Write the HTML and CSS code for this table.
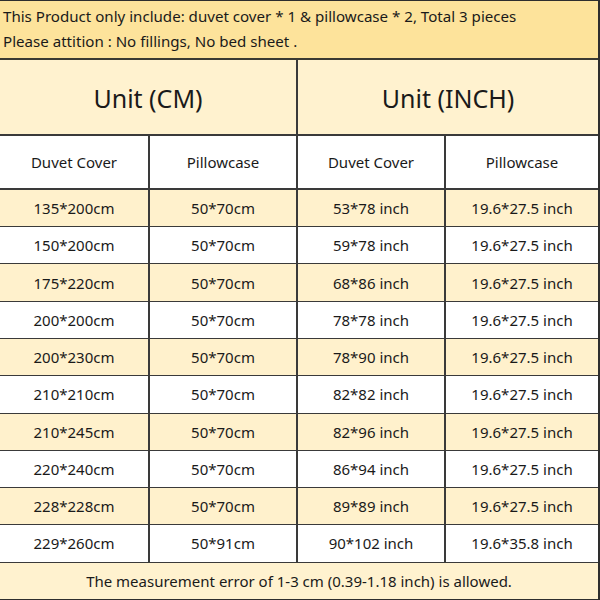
FILE: index.html
```html
<!DOCTYPE html>
<html>
<head>
<meta charset="utf-8">
<link rel="stylesheet" href="styles.css">
</head>
<body>
<div class="sheet">
  <div class="note">
    <div>This Product only include: duvet cover * 1 &amp; pillowcase * 2, Total 3 pieces</div>
    <div>Please attition : No fillings, No bed sheet .</div>
  </div>
  <table class="sizes">
    <colgroup>
      <col class="c1"><col class="c2"><col class="c3"><col class="c4">
    </colgroup>
    <tr class="unit"><td colspan="2">Unit (CM)</td><td colspan="2">Unit (INCH)</td></tr>
    <tr class="head"><td>Duvet Cover</td><td>Pillowcase</td><td>Duvet Cover</td><td>Pillowcase</td></tr>
    <tr class="alt"><td>135*200cm</td><td>50*70cm</td><td>53*78 inch</td><td>19.6*27.5 inch</td></tr>
    <tr><td>150*200cm</td><td>50*70cm</td><td>59*78 inch</td><td>19.6*27.5 inch</td></tr>
    <tr class="alt"><td>175*220cm</td><td>50*70cm</td><td>68*86 inch</td><td>19.6*27.5 inch</td></tr>
    <tr><td>200*200cm</td><td>50*70cm</td><td>78*78 inch</td><td>19.6*27.5 inch</td></tr>
    <tr class="alt"><td>200*230cm</td><td>50*70cm</td><td>78*90 inch</td><td>19.6*27.5 inch</td></tr>
    <tr><td>210*210cm</td><td>50*70cm</td><td>82*82 inch</td><td>19.6*27.5 inch</td></tr>
    <tr class="alt"><td>210*245cm</td><td>50*70cm</td><td>82*96 inch</td><td>19.6*27.5 inch</td></tr>
    <tr><td>220*240cm</td><td>50*70cm</td><td>86*94 inch</td><td>19.6*27.5 inch</td></tr>
    <tr class="alt"><td>228*228cm</td><td>50*70cm</td><td>89*89 inch</td><td>19.6*27.5 inch</td></tr>
    <tr><td>229*260cm</td><td>50*91cm</td><td>90*102 inch</td><td>19.6*35.8 inch</td></tr>
    <tr class="foot"><td colspan="4">The measurement error of 1-3 cm (0.39-1.18 inch) is allowed.</td></tr>
  </table>
</div>
</body>
</html>
```
FILE: styles.css
```css
html, body {
  margin: 0;
  padding: 0;
  background: #ffffff;
}
.sheet {
  width: 598px;
  height: 598px;
  border-top: 1px solid #2e2e2e;
  border-right: 2px solid #2e2e2e;
  border-bottom: 2px solid #2e2e2e;
  font-family: "Noto Sans", "Open Sans", sans-serif;
  color: #1a1a1a;
  display: flex;
  flex-direction: column;
}
.note {
  height: 59px;
  box-sizing: border-box;
  background: #fde39b;
  padding: 3px 0 0 3px;
  font-size: 15.1px;
  line-height: 25px;
  border-bottom: 2px solid #3a3a32;
}
.sizes {
  width: 598px;
  border-collapse: collapse;
  table-layout: fixed;
  flex: 1;
}
.c1 { width: 149px; }
.c2 { width: 148px; }
.c3 { width: 148px; }
.c4 { width: 153px; }
.sizes td {
  text-align: center;
  vertical-align: middle;
  padding: 0;
  font-size: 15px;
  height: 36px;
  border-top: 1px solid #3a3a3a;
  border-left: 2px solid #3a3a3a;
}
.sizes tr td:first-child {
  border-left: none;
}
.sizes tr:first-child td {
  border-top: none;
}
.unit td {
  background: #fff2cf;
  font-size: 25px;
  height: 71px;
  padding-top: 2px;
}
.head td {
  background: #ffffff;
  height: 52px;
  border-top: 2px solid #3a3a3a;
}
.head + tr td {
  border-top: 2px solid #3a3a3a;
}
.alt td {
  background: #fff1cc;
}
.foot td {
  background: #fff2cf;
  height: 36px;
}
```
